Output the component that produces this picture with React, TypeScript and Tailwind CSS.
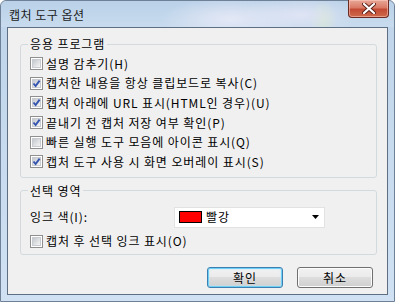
function CheckBox({ checked }: { checked?: boolean }) {
  return (
    <span className="flex size-[13px] shrink-0 items-center justify-center border border-[#8f8f8f] bg-white">
      <span className="relative flex size-[9px] items-center justify-center border border-[#c8cbcf] bg-gradient-to-br from-[#c4c8cd] to-[#f4f4f4]">
        {checked && (
          <svg width="11" height="11" viewBox="0 0 11 11" className="absolute -left-[2px] -top-[2px] overflow-visible">
            <polyline points="2.5,5.5 4.6,8 8.6,2.6" fill="none" stroke="#3554b0" strokeWidth="1.9" />
          </svg>
        )}
      </span>
    </span>
  )
}

function Check({ label, checked }: { label: string; checked?: boolean }) {
  return (
    <label className="flex h-[19.6px] items-center gap-[3px]">
      <CheckBox checked={checked} />
      <span>{label}</span>
    </label>
  )
}

function Button({ label, primary }: { label: string; primary?: boolean }) {
  return (
    <button
      className={
        primary
          ? "h-[21px] w-[76px] rounded-[3px] border border-[#3c7fb1] bg-[linear-gradient(#f2f2f2_0%,#ebebeb_45%,#dddddd_50%,#cfcfcf_100%)] shadow-[inset_0_0_0_1px_#6fd0f5,inset_0_0_2px_1px_#b8e8fa]"
          : "h-[21px] w-[76px] rounded-[3px] border border-[#707070] bg-[linear-gradient(#f2f2f2_0%,#ebebeb_45%,#dddddd_50%,#cfcfcf_100%)] shadow-[inset_0_0_0_1px_#fcfcfc]"
      }
    >
      {label}
    </button>
  )
}

export default function App() {
  return (
    <div className="flex h-[302px] w-[395px] flex-col rounded-t-[6px] border border-[#6f8196] bg-[linear-gradient(180deg,#bfd4ea_0%,#c9dcef_60%,#cfe1f3_100%)] font-['Noto_Sans_CJK_KR','Noto_Sans',sans-serif] text-[12px] leading-[14px] tracking-[0.9px] text-black">
      <div className="relative flex h-[26px] shrink-0 items-center rounded-t-[6px] bg-[radial-gradient(ellipse_70px_22px_at_230px_18px,#e4e8f6_0%,transparent_100%),radial-gradient(ellipse_60px_20px_at_300px_14px,#dfe4f4_0%,transparent_100%),radial-gradient(ellipse_14px_18px_at_322px_18px,#d2e6c8_0%,transparent_100%),linear-gradient(180deg,#bad1e8,#c8dbee)] pl-[8px]">
        <span className="pt-[1px] tracking-[0.5px] text-[#1b1b1b]">캡처 도구 옵션</span>
        <button className="absolute -top-[1px] right-[5px] flex h-[18px] w-[41px] items-center justify-center rounded-b-[4px] border border-t-0 border-[#6b2a22] bg-[linear-gradient(180deg,#e9a898_0%,#d97a66_45%,#c24a34_55%,#cf6a4c_100%)] shadow-[inset_0_0_0_1px_rgba(255,210,200,0.5)]">
          <svg width="14" height="11" viewBox="0 0 14 11">
            <path d="M2 1 L12 10 M12 1 L2 10" stroke="#5a2018" strokeWidth="4" strokeLinecap="round" />
            <path d="M2 1 L12 10 M12 1 L2 10" stroke="#ffffff" strokeWidth="2.2" strokeLinecap="round" />
          </svg>
        </button>
      </div>

      <div className="flex flex-1 px-[6px] pb-[6px]">
        <div className="flex flex-1 flex-col border border-[#5e6f83] bg-[#f0f0f0] pt-[9px]">
          <fieldset className="ml-[12px] mr-[10px] rounded-[3px] border border-[#d3dade] px-[9px] pb-[5px] pt-[3px]">
            <legend className="-ml-[2px] px-[2px]">응용 프로그램</legend>
            <Check label="설명 감추기(H)" />
            <Check label="캡처한 내용을 항상 클립보드로 복사(C)" checked />
            <Check label="캡처 아래에 URL 표시(HTML인 경우)(U)" checked />
            <Check label="끝내기 전 캡처 저장 여부 확인(P)" checked />
            <Check label="빠른 실행 도구 모음에 아이콘 표시(Q)" />
            <Check label="캡처 도구 사용 시 화면 오버레이 표시(S)" checked />
          </fieldset>

          <fieldset className="ml-[12px] mr-[10px] mt-[6px] rounded-[3px] border border-[#d3dade] px-[9px] pb-[3px] pt-[9px]">
            <legend className="-ml-[2px] px-[2px]">선택 영역</legend>
            <div className="flex items-center">
              <span className="w-[144px]">잉크 색(I):</span>
              <div className="flex h-[21px] w-[151px] items-center border border-[#e2e2e2] bg-white pl-[4px] pr-[5px]">
                <span className="h-[12px] w-[23px] border border-black bg-[#ff0000]" />
                <span className="ml-[4px] flex-1">빨강</span>
                <svg width="7" height="4" viewBox="0 0 7 4">
                  <path d="M0 0 H7 L3.5 4 Z" fill="#000" />
                </svg>
              </div>
            </div>
            <div className="mt-[4px]">
              <Check label="캡처 후 선택 잉크 표시(O)" />
            </div>
          </fieldset>

          <div className="mt-[12px] flex justify-end gap-[14px] pr-[14px]">
            <Button label="확인" primary />
            <Button label="취소" />
          </div>
        </div>
      </div>
    </div>
  )
}
